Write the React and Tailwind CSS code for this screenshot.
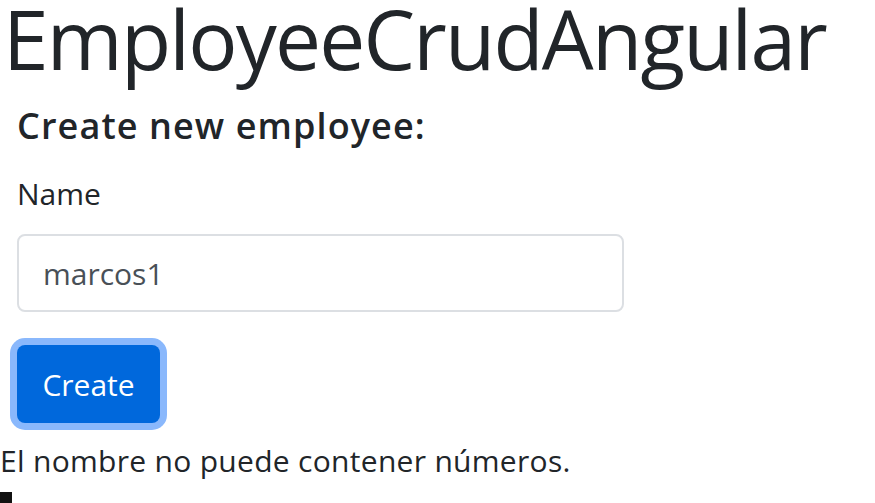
export default function App() {
  const font = { fontFamily: '"Open Sans", "Noto Sans", sans-serif' };
  return (
    <div className="w-[875px] h-[503px] bg-white overflow-hidden text-[#212529] relative" style={font}>
      <h1 className="ml-[3px] mt-[-3px] text-[82px] leading-none font-medium tracking-[-1.8px] whitespace-nowrap">EmployeeCrudAngular</h1>
      <div className="pl-[17px] flex flex-col items-start">
        <h2 className="mt-[29px] text-[36px] leading-none font-semibold tracking-[1.1px] whitespace-nowrap">Create new employee:</h2>
        <label className="mt-[35px] text-[30px] leading-none">Name</label>
        <div className="mt-[25px] w-[607px] h-[78px] rounded-[8px] border-2 border-[#dcdfe3] flex items-center pl-[24px] text-[30px] text-[#495057]">marcos1</div>
        <div className="mt-[33px] w-[143px] h-[78px] rounded-[8px] bg-[#0068dc] text-white text-[30px] flex items-center justify-center shadow-[0_0_0_7px_#8ab8fc]">Create</div>
      </div>
      <p className="mt-[23px] text-[30px] leading-none tracking-[0.3px] whitespace-nowrap">El nombre no puede contener números.</p>
      <div className="absolute left-0 top-[492px] w-[12px] h-[12px] bg-[#111]"></div>
    </div>
  );
}
